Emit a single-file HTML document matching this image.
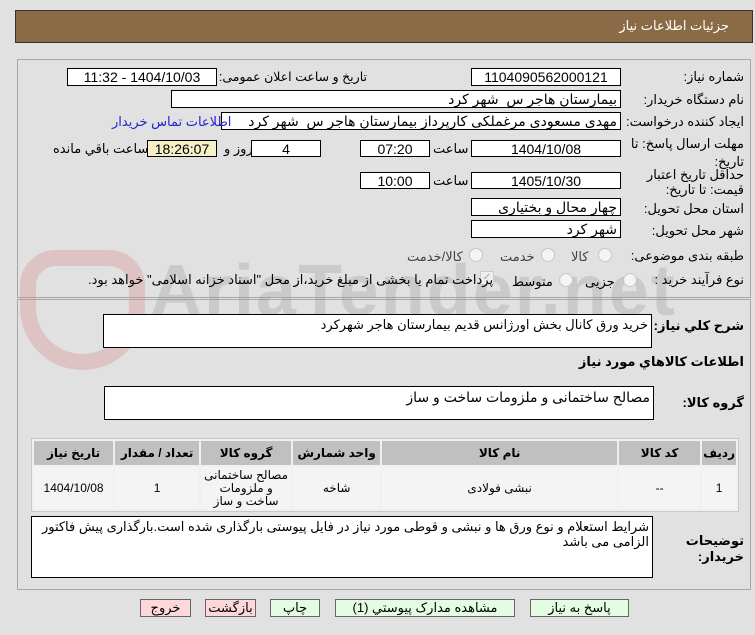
<!DOCTYPE html>
<html><head><meta charset="utf-8"><style>
body{margin:0;width:755px;height:635px;background:#e1e1e1;font-family:"Liberation Sans","DejaVu Sans",sans-serif;font-size:13px;color:#000;position:relative;overflow:hidden;direction:rtl}
.a{position:absolute;white-space:nowrap}
.in{position:absolute;background:#fff;border:1px solid #000;box-sizing:border-box;text-align:center;line-height:16px;font-size:14px}
.r{text-align:right;padding-right:3px}
.pan{position:absolute;border:1px solid #a8a8a8;box-sizing:border-box;background:#e1e1e1}
.rad{position:absolute;width:12px;height:12px;border-radius:50%;border:1px solid #c8c8c8;background:#f4f4f4}
table{border-collapse:separate;border-spacing:2px;position:absolute;left:31px;top:438px;width:708px;background:#f0f0f0;border:1px solid #c8c8c8}
th{background:#c0c0c0;height:22px;font-size:12px}
td{background:#f4f4f4;text-align:center;height:40px;font-size:12px}
.btn{position:absolute;top:599px;height:18px;border:1px solid #666;box-sizing:border-box;text-align:center;line-height:16px;font-size:13px}
.g{background:#e2fde2}.p{background:#fcd8d8}
</style></head><body>
<div class="a" style="left:15px;top:10px;width:738px;height:33px;background:#8b6b45;border:1px solid #333;box-sizing:border-box"></div>
<div class="a" style="right:26px;top:18px;color:#fff;font-size:13px">جزئیات اطلاعات نیاز</div>
<div class="pan" style="left:17px;top:59px;width:734px;height:239px"></div>
<div class="pan" style="left:17px;top:299px;width:734px;height:291px"></div>
<!-- watermark -->
<div class="a" style="left:20px;top:250px;width:125px;height:120px;border:16px solid rgba(215,140,140,.35);border-radius:40px 40px 70px 70px;box-sizing:border-box"></div>
<div class="a" style="left:150px;top:250px;font-size:72px;font-weight:bold;color:rgba(150,150,150,.3);direction:ltr;letter-spacing:2px">AriaTender.net</div>

<div class="a" style="right:11px;top:69px">شماره نیاز:</div>
<div class="in" style="left:471px;top:68px;width:150px;height:18px">1104090562000121</div>
<div class="a" style="right:388px;top:69px;font-size:12.5px">تاریخ و ساعت اعلان عمومی:</div>
<div class="in" style="left:67px;top:68px;width:150px;height:18px">1404/10/03 - 11:32</div>

<div class="a" style="right:11px;top:92px">نام دستگاه خریدار:</div>
<div class="in r" style="left:171px;top:90px;width:450px;height:18px">بیمارستان هاجر س&nbsp; شهر کرد</div>

<div class="a" style="right:11px;top:114px">ایجاد کننده درخواست:</div>
<div class="in r" style="left:221px;top:112px;width:400px;height:18px">مهدی مسعودی مرغملکی کارپرداز بیمارستان هاجر س&nbsp; شهر کرد</div>
<div class="a" style="left:112px;top:114px;color:#2323d4">اطلاعات تماس خریدار</div>

<div class="a" style="right:11px;top:135px;line-height:18px;text-align:right">مهلت ارسال پاسخ: تا<br>تاریخ:</div>
<div class="in" style="left:471px;top:140px;width:150px;height:17px">1404/10/08</div>
<div class="a" style="left:433px;top:141px">ساعت</div>
<div class="in" style="left:360px;top:140px;width:70px;height:17px">07:20</div>
<div class="in" style="left:251px;top:140px;width:70px;height:17px">4</div>
<div class="a" style="left:224px;top:141px">روز و</div>
<div class="in" style="left:147px;top:140px;width:70px;height:17px;background:#f5f0c8">18:26:07</div>
<div class="a" style="left:53px;top:141px">ساعت باقي مانده</div>

<div class="a" style="right:11px;top:167px;line-height:15px;text-align:right">حداقل تاریخ اعتبار<br>قیمت: تا تاریخ:</div>
<div class="in" style="left:471px;top:172px;width:150px;height:17px">1405/10/30</div>
<div class="a" style="left:433px;top:173px">ساعت</div>
<div class="in" style="left:360px;top:172px;width:70px;height:17px">10:00</div>

<div class="a" style="right:11px;top:201px">استان محل تحویل:</div>
<div class="in r" style="left:471px;top:198px;width:150px;height:18px">چهار محال و بختیاری</div>
<div class="a" style="right:11px;top:223px">شهر محل تحویل:</div>
<div class="in r" style="left:471px;top:220px;width:150px;height:18px">شهر کرد</div>

<div class="a" style="right:11px;top:248px">طبقه بندی موضوعی:</div>
<div class="rad" style="left:598px;top:248px"></div><div class="a" style="left:571px;top:249px;color:#444">کالا</div>
<div class="rad" style="left:541px;top:248px"></div><div class="a" style="left:500px;top:249px;color:#444">خدمت</div>
<div class="rad" style="left:469px;top:248px"></div><div class="a" style="left:407px;top:249px;color:#444">کالا/خدمت</div>

<div class="a" style="right:11px;top:272px">نوع فرآیند خرید :</div>
<div class="rad" style="left:623px;top:273px"></div><div class="a" style="left:585px;top:274px">جزیی</div>
<div class="rad" style="left:559px;top:273px"></div><div class="a" style="left:512px;top:274px">متوسط</div>
<div class="a" style="left:480px;top:271px;width:12px;height:12px;border:1px solid #ccc;background:#eee;color:#aaa;font-size:10px;line-height:12px;text-align:center">✓</div>
<div class="a" style="left:88px;top:272px">پرداخت تمام یا بخشی از مبلغ خرید،از محل "اسناد خزانه اسلامی" خواهد بود.</div>

<div class="a" style="right:11px;top:318px;font-weight:bold">شرح کلي نياز:</div>
<div class="in r" style="left:103px;top:314px;width:549px;height:34px;text-align:right;line-height:20px;font-size:13px">خرید ورق کانال بخش اورژانس قدیم بیمارستان هاجر شهرکرد</div>
<div class="a" style="right:11px;top:354px;font-weight:bold">اطلاعات کالاهاي مورد نياز</div>
<div class="a" style="right:11px;top:395px;font-weight:bold">گروه کالا:</div>
<div class="in r" style="left:104px;top:386px;width:550px;height:34px;line-height:14px;padding-top:3px;text-align:right">مصالح ساختمانی و ملزومات ساخت و ساز</div>

<table><tr><th style="width:28px">ردیف</th><th style="width:79px">کد کالا</th><th style="width:233px">نام کالا</th><th style="width:85px">واحد شمارش</th><th style="width:88px">گروه کالا</th><th style="width:82px">تعداد / مقدار</th><th>تاریخ نیاز</th></tr>
<tr><td>1</td><td>--</td><td>نبشی فولادی</td><td>شاخه</td><td style="line-height:13px">مصالح ساختمانی و ملزومات ساخت و ساز</td><td>1</td><td>1404/10/08</td></tr></table>

<div class="a" style="right:11px;top:533px;font-weight:bold;line-height:16px;text-align:right">توضیحات<br>خریدار:</div>
<div class="in" style="left:31px;top:516px;width:622px;height:62px;text-align:right;padding:2px 3px;white-space:normal;line-height:15px;font-size:13px">شرایط استعلام و نوع ورق ها و نبشی و قوطی مورد نیاز در فایل پیوستی بارگذاری شده است.بارگذاری پیش فاکتور الزامی می باشد</div>

<div class="btn p" style="left:140px;width:51px">خروج</div>
<div class="btn p" style="left:205px;width:51px">بازگشت</div>
<div class="btn g" style="left:270px;width:50px">چاپ</div>
<div class="btn g" style="left:335px;width:180px">مشاهده مدارک پیوستي (1)</div>
<div class="btn g" style="left:530px;width:99px">پاسخ به نیاز</div>
</body></html>
